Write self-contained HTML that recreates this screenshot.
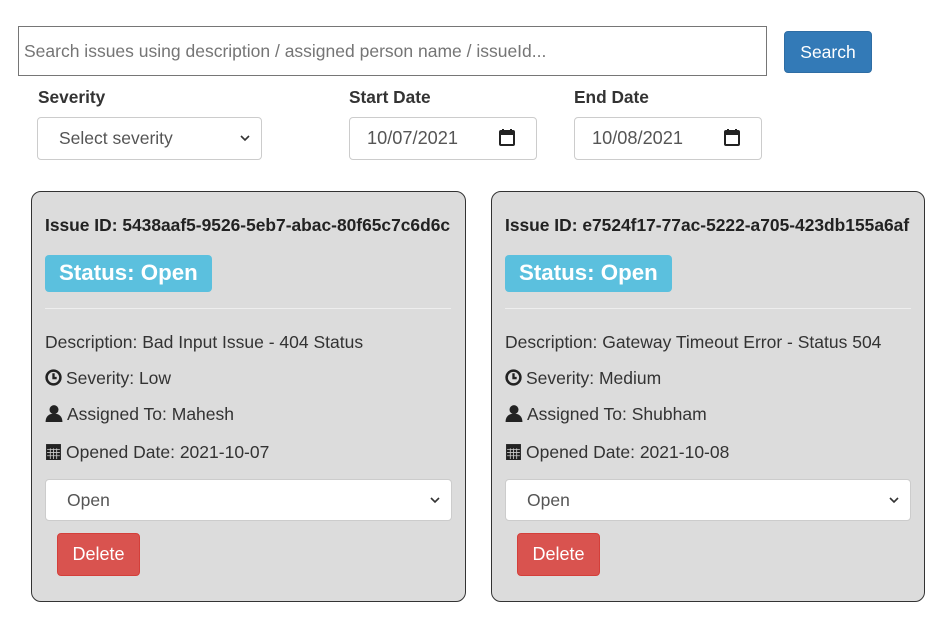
<!DOCTYPE html>
<html><head><meta charset="utf-8"><style>
*{box-sizing:border-box}
body{margin:0;width:941px;height:626px;background:#fff;font-family:"Liberation Sans",Arial,sans-serif;color:#333;position:relative;font-size:17.5px}
.abs{position:absolute}
.search{left:18px;top:26px;width:749px;height:50px;border:1px solid #767676;color:#757575;font-size:17.5px;padding:14px 5px;line-height:20px;white-space:nowrap}
.btn{left:784px;top:31px;width:88px;height:42px;background:#337ab7;border:1px solid #2e6da4;border-radius:4px;color:#fff;font-size:17.5px;text-align:center;line-height:40px}
.lbl{font-weight:bold;font-size:17.3px;top:87px}
.ctl{top:117px;height:43px;border:1px solid #ccc;border-radius:4px;font-size:17.5px;color:#555;line-height:41px}
.card{top:191px;width:435px;height:411px;background:#dcdcdc;border:1px solid #333;border-radius:10px}
.card .id{position:absolute;left:13px;top:23px;font-weight:bold;font-size:17.4px;color:#222;white-space:nowrap}
.card .st{position:absolute;left:13px;top:63px;width:167px;height:37px;background:#5bc0de;color:#fff;font-weight:bold;font-size:22.3px;border-radius:4px;padding-left:14px;line-height:36px}
.card hr{position:absolute;left:13px;top:116px;width:406px;margin:0;border:0;border-top:1px solid #eee}
.card .ln{position:absolute;left:13px;font-size:17.5px;color:#333;white-space:nowrap}
.card .sel{position:absolute;left:13px;top:287px;width:407px;height:42px;background:#fff;border:1px solid #ccc;border-radius:4px;font-size:17.5px;color:#555;line-height:40px;padding-left:21px}
.card .del{position:absolute;left:25px;top:341px;width:83px;height:43px;background:#d9534f;border:1px solid #d43f3a;border-radius:4px;color:#fff;font-size:18px;text-align:center;line-height:41px}
.chev{position:absolute;right:10px;top:0}
.ic{display:inline-block;vertical-align:-2px;margin-right:4px}
</style></head><body>
<div class="abs search">Search issues using description / assigned person name / issueId...</div>
<div class="abs btn">Search</div>
<div class="abs lbl" style="left:38px">Severity</div>
<div class="abs lbl" style="left:349px">Start Date</div>
<div class="abs lbl" style="left:574px">End Date</div>
<div class="abs ctl" style="left:37px;width:225px;padding-left:21px">Select severity<svg class="chev" width="12" height="41" viewBox="0 0 12 41"><path d="M2 18l4 4 4-4" stroke="#333" stroke-width="1.6" fill="none"/></svg></div>
<div class="abs ctl" style="left:349px;width:188px;padding-left:17px;font-size:18.2px">10/07/2021<svg class="chev" style="right:20px" width="18" height="41" viewBox="0 0 18 41"><rect x="2" y="13" width="14" height="14" rx="1" fill="none" stroke="#222" stroke-width="2"/><rect x="2" y="13" width="14" height="4" fill="#222"/><path d="M5 11v3M13 11v3" stroke="#222" stroke-width="2"/></svg></div>
<div class="abs ctl" style="left:574px;width:188px;padding-left:17px;font-size:18.2px">10/08/2021<svg class="chev" style="right:20px" width="18" height="41" viewBox="0 0 18 41"><rect x="2" y="13" width="14" height="14" rx="1" fill="none" stroke="#222" stroke-width="2"/><rect x="2" y="13" width="14" height="4" fill="#222"/><path d="M5 11v3M13 11v3" stroke="#222" stroke-width="2"/></svg></div>

<div class="abs card" style="left:31px">
<div class="id">Issue ID: 5438aaf5-9526-5eb7-abac-80f65c7c6d6c</div>
<div class="st">Status: Open</div><hr>
<div class="ln" style="top:140px">Description: Bad Input Issue - 404 Status</div>
<div class="ln" style="top:176px"><svg class="ic" width="17" height="17" viewBox="0 0 16 16"><circle cx="8" cy="8" r="6.5" fill="none" stroke="#222" stroke-width="2.4"/><path d="M8 4v4.5h3" stroke="#222" stroke-width="2.2" fill="none"/></svg>Severity: Low</div>
<div class="ln" style="top:212px"><svg class="ic" width="18" height="18" viewBox="0 0 16 16"><circle cx="8" cy="5" r="4" fill="#222"/><path d="M0.5 16c0-5 3-7.5 7.5-7.5s7.5 2.5 7.5 7.5z" fill="#222"/></svg>Assigned To: Mahesh</div>
<div class="ln" style="top:250px"><svg class="ic" width="17" height="17" viewBox="0 0 16 16"><rect x="1" y="1" width="14" height="15" fill="#222"/><path d="M2 6h12M2 9h12M2 12h12M5 5v10M8 5v10M11 5v10" stroke="#ccc" stroke-width=".8"/></svg>Opened Date: 2021-10-07</div>
<div class="sel">Open<svg class="chev" width="12" height="40" viewBox="0 0 12 40"><path d="M2 18l4 4 4-4" stroke="#333" stroke-width="1.6" fill="none"/></svg></div>
<div class="del">Delete</div>
</div>

<div class="abs card" style="left:491px;width:434px">
<div class="id">Issue ID: e7524f17-77ac-5222-a705-423db155a6af</div>
<div class="st">Status: Open</div><hr>
<div class="ln" style="top:140px">Description: Gateway Timeout Error - Status 504</div>
<div class="ln" style="top:176px"><svg class="ic" width="17" height="17" viewBox="0 0 16 16"><circle cx="8" cy="8" r="6.5" fill="none" stroke="#222" stroke-width="2.4"/><path d="M8 4v4.5h3" stroke="#222" stroke-width="2.2" fill="none"/></svg>Severity: Medium</div>
<div class="ln" style="top:212px"><svg class="ic" width="18" height="18" viewBox="0 0 16 16"><circle cx="8" cy="5" r="4" fill="#222"/><path d="M0.5 16c0-5 3-7.5 7.5-7.5s7.5 2.5 7.5 7.5z" fill="#222"/></svg>Assigned To: Shubham</div>
<div class="ln" style="top:250px"><svg class="ic" width="17" height="17" viewBox="0 0 16 16"><rect x="1" y="1" width="14" height="15" fill="#222"/><path d="M2 6h12M2 9h12M2 12h12M5 5v10M8 5v10M11 5v10" stroke="#ccc" stroke-width=".8"/></svg>Opened Date: 2021-10-08</div>
<div class="sel" style="width:406px">Open<svg class="chev" width="12" height="40" viewBox="0 0 12 40"><path d="M2 18l4 4 4-4" stroke="#333" stroke-width="1.6" fill="none"/></svg></div>
<div class="del">Delete</div>
</div>
</body></html>
